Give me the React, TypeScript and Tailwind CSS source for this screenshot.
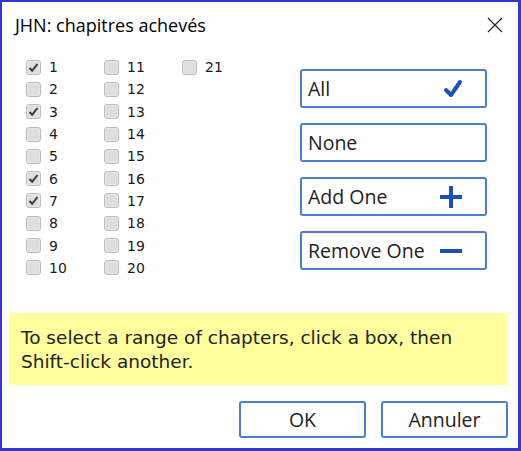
import React from 'react';

const checked = new Set([1, 3, 6, 7]);

function Box({ on }: { on: boolean }) {
  return (
    <span className="w-[15px] h-[15px] rounded-[3px] border border-[#bcbcbc] bg-[#dedede] shadow-[inset_0_0_0_1px_#e8e8e8] flex items-center justify-center">
      {on && (
        <svg width="11" height="11" viewBox="0 0 11 11">
          <path d="M1.5 6 L4.2 8.8 L9.5 2" fill="none" stroke="#3a3a3a" strokeWidth="2" />
        </svg>
      )}
    </span>
  );
}

function Chapter({ n }: { n: number }) {
  return (
    <label className="flex items-center h-[22.3px] gap-2">
      <Box on={checked.has(n)} />
      <span className="text-[14px] text-[#1a1a1a] font-['DejaVu_Sans',sans-serif] leading-none">{n}</span>
    </label>
  );
}

function ActionButton({ label, icon }: { label: string; icon?: React.ReactNode }) {
  return (
    <button className="h-[39px] w-[187px] border-2 border-[#4d7fd1] rounded-[3px] bg-white flex items-center justify-between pl-[6px] pr-[22px] text-[19.5px] text-[#222]">
      <span>{label}</span>
      {icon}
    </button>
  );
}

const blue = '#1c50b8';

export default function App() {
  const columns = [
    Array.from({ length: 10 }, (_, i) => i + 1),
    Array.from({ length: 10 }, (_, i) => i + 11),
    [21],
  ];

  return (
    <div className="w-[521px] h-[451px] bg-white border-t-2 border-l-2 border-r-[3px] border-b-[3px] border-[#3434cf] flex flex-col font-['Open_Sans','Noto_Sans',sans-serif]">
      {/* title bar */}
      <div className="flex items-start justify-between h-[54px]">
        <h1 className="pl-[13px] pt-[11px] text-[18px] leading-[24px] text-black">JHN: chapitres achevés</h1>
        <button className="mt-[15px] mr-[15px]">
          <svg width="16" height="16" viewBox="0 0 16 16">
            <path d="M1 1 L15 15 M15 1 L1 15" stroke="#222" strokeWidth="1.2" />
          </svg>
        </button>
      </div>

      {/* body */}
      <div className="flex pl-[24px] h-[257px]">
        <div className="flex w-[274px]">
          {columns.map((col, i) => (
            <div key={i} className="w-[78px] flex flex-col">
              {col.map((n) => (
                <Chapter key={n} n={n} />
              ))}
            </div>
          ))}
        </div>
        <div className="flex flex-col gap-[15px] pt-[13px]">
          <ActionButton
            label="All"
            icon={
              <svg width="20" height="20" viewBox="0 0 20 20">
                <path d="M3 11 L8 16 L17 3" fill="none" stroke={blue} strokeWidth="4" strokeLinecap="round" strokeLinejoin="round" />
              </svg>
            }
          />
          <ActionButton label="None" />
          <ActionButton
            label="Add One"
            icon={
              <svg width="24" height="24" viewBox="0 0 24 24">
                <path d="M12 1 V23 M1 12 H23" stroke={blue} strokeWidth="4" />
              </svg>
            }
          />
          <ActionButton
            label="Remove One"
            icon={
              <svg width="24" height="24" viewBox="0 0 24 24">
                <path d="M1 12 H23" stroke={blue} strokeWidth="4" />
              </svg>
            }
          />
        </div>
      </div>

      {/* hint */}
      <div className="ml-[7px] mr-[11px] h-[72px] bg-[#ffff9e] pl-[12px] pt-[13px] text-[18.5px] leading-[24px] text-[#222] font-['DejaVu_Sans',sans-serif]">
        To select a range of chapters, click a box, then
        <br />
        Shift-click another.
      </div>

      {/* footer */}
      <div className="flex justify-end gap-[15px] mt-[16px] mr-[10px]">
        <button className="w-[127px] h-[37px] border-2 border-[#4d7fd1] rounded-[3px] bg-white text-[19.5px] text-[#222]">OK</button>
        <button className="w-[127px] h-[37px] border-2 border-[#4d7fd1] rounded-[3px] bg-white text-[19.5px] text-[#222]">Annuler</button>
      </div>
    </div>
  );
}
